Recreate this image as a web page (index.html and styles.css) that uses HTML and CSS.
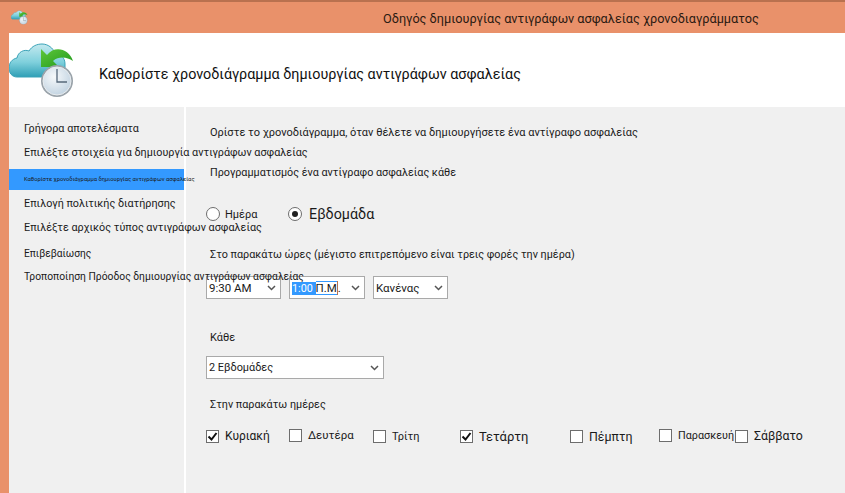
FILE: index.html
```html
<!DOCTYPE html>
<html lang="el">
<head>
<meta charset="utf-8">
<title>Οδηγός δημιουργίας αντιγράφων ασφαλείας χρονοδιαγράμματος</title>
<link rel="stylesheet" href="styles.css">
</head>
<body>

<svg class="defs" width="0" height="0">
  <defs>
    <linearGradient id="cloudfill" x1="0" y1="0" x2="0" y2="1">
      <stop offset="0" stop-color="#c4e9ef"/>
      <stop offset="0.55" stop-color="#7fd0dc"/>
      <stop offset="1" stop-color="#2f9fb6"/>
    </linearGradient>
    <linearGradient id="arrowfill" x1="0" y1="0" x2="1" y2="1">
      <stop offset="0" stop-color="#5fc63a"/>
      <stop offset="1" stop-color="#1f9a1c"/>
    </linearGradient>
    <radialGradient id="clockfill" cx="0.4" cy="0.35" r="0.8">
      <stop offset="0" stop-color="#f6f9fb"/>
      <stop offset="1" stop-color="#b9cddd"/>
    </radialGradient>
    <symbol id="backupicon" viewBox="0 0 66 54">
      <path d="M8 34 C3 34 0 30 0 25 C0 20 3 16 8 15 C9 9 15 6 20 8 C23 3 28 1 33 1 C39 1 44 5 46 10 C52 11 56 15 56 21 L56 34 Z" fill="url(#cloudfill)" stroke="#3aa3b8" stroke-width="1"/>
      <path d="M32 6 L32 24 L50 24 L44 18 C50 13 58 14 64 18 C60 6 46 2 38 12 Z" fill="url(#arrowfill)"/>
      <circle cx="48" cy="38" r="16" fill="#9aa3aa"/>
      <circle cx="48" cy="38" r="14" fill="url(#clockfill)" stroke="#e8ecef" stroke-width="1"/>
      <path d="M48 26 V39 H58" fill="none" stroke="#56687a" stroke-width="1.300"/>
    </symbol>
  </defs>
</svg>

<div class="window">
  <div class="titlebar">
    <svg class="smallicon"><use href="#backupicon"/></svg>
    <div class="title">Οδηγός δημιουργίας αντιγράφων ασφαλείας χρονοδιαγράμματος</div>
  </div>

  <div class="header">
    <svg class="bigicon"><use href="#backupicon"/></svg>
    <h1>Καθορίστε χρονοδιάγραμμα δημιουργίας αντιγράφων ασφαλείας</h1>
  </div>

  <div class="main">
    <div class="sidebar">
      <div class="step step1">Γρήγορα αποτελέσματα</div>
      <div class="step step2">Επιλέξτε στοιχεία για δημιουργία αντιγράφων ασφαλείας</div>
      <div class="step current">Καθορίστε χρονοδιάγραμμα δημιουργίας αντιγράφων ασφαλείας</div>
      <div class="step step4">Επιλογή πολιτικής διατήρησης</div>
      <div class="step step5">Επιλέξτε αρχικός τύπος αντιγράφων ασφαλείας</div>
      <div class="step step6">Επιβεβαίωσης</div>
      <div class="step step7">Τροποποίηση Πρόοδος δημιουργίας αντιγράφων ασφαλείας</div>
    </div>

    <div class="panel">
      <p class="line intro">Ορίστε το χρονοδιάγραμμα, όταν θέλετε να δημιουργήσετε ένα αντίγραφο ασφαλείας</p>
      <p class="line every">Προγραμματισμός ένα αντίγραφο ασφαλείας κάθε</p>

      <div class="radios">
        <span class="radio"></span><span class="radiolabel small">Ημέρα</span>
        <span class="radio on"></span><span class="radiolabel big">Εβδομάδα</span>
      </div>

      <p class="line hours">Στο παρακάτω ώρες (μέγιστο επιτρεπόμενο είναι τρεις φορές την ημέρα)</p>

      <div class="times">
        <div class="combo w75"><span>9:30 AM</span><svg class="chevron" viewBox="0 0 9 6"><path d="M1 1 L4.500 4.500 L8 1"/></svg></div>
        <div class="combo w76"><span><span class="sel">1:00 </span><span class="caret">Π.Μ</span>.</span><svg class="chevron" viewBox="0 0 9 6"><path d="M1 1 L4.500 4.500 L8 1"/></svg></div>
        <div class="combo w75"><span>Κανένας</span><svg class="chevron" viewBox="0 0 9 6"><path d="M1 1 L4.500 4.500 L8 1"/></svg></div>
      </div>

      <p class="line eachlabel">Κάθε</p>
      <div class="combo wide"><span>2 Εβδομάδες</span><svg class="chevron" viewBox="0 0 9 6"><path d="M1 1 L4.500 4.500 L8 1"/></svg></div>

      <p class="line dayslabel">Στην παρακάτω ημέρες</p>

      <div class="days">
        <div class="day d1"><span class="check on"><svg viewBox="0 0 11 11"><path d="M1.500 5.500 L4.500 8.500 L9.500 2"/></svg></span><span>Κυριακή</span></div>
        <div class="day d2 raised"><span class="check"></span><span>Δευτέρα</span></div>
        <div class="day d3"><span class="check"></span><span>Τρίτη</span></div>
        <div class="day d4"><span class="check on"><svg viewBox="0 0 11 11"><path d="M1.500 5.500 L4.500 8.500 L9.500 2"/></svg></span><span>Τετάρτη</span></div>
        <div class="day d5"><span class="check"></span><span>Πέμπτη</span></div>
        <div class="day d6 raised"><span class="check"></span><span>Παρασκευή</span></div>
        <div class="day d7"><span class="check"></span><span>Σάββατο</span></div>
      </div>
    </div>
  </div>
</div>

</body>
</html>
```

FILE: styles.css
```css
html, body {margin:0; padding:0;}
body {width:845px; height:493px; overflow:hidden; font:10.8px Roboto, "Open Sans", sans-serif; color:#1a1a1a;}
.defs {position:absolute;}

.window {height:491px; background-color:#E9916A; border-top:2px solid #B9714F; padding-left:9px; display:flex; flex-direction:column;}

.titlebar {height:31px; flex:none; display:flex; align-items:center;}
.smallicon {width:17px; height:15px; margin:0 0 0 2px; flex:none;}
.title {margin:2px 0 0 355px; font-size:12.7px; color:#2b1a12; white-space:nowrap;}

.header {height:74px; flex:none; background-color:#fff; display:flex; align-items:flex-start;}
.bigicon {width:66px; height:54px; margin:10px 0 0 0; flex:none;}
h1 {margin:33px 0 0 24px; font-size:14.35px; font-weight:normal; color:#111; white-space:nowrap;}

.main {flex:1; display:flex; background-color:#F0F0F0;}

/* step text runs past the column, over the panel and its combos */
.sidebar {width:175px; flex:none; border-right:2px solid #fff; padding-top:12px; position:relative; z-index:1;}
.step {padding-left:15px; white-space:nowrap; height:24px; line-height:20px;}
.step2 {height:26px;}
.current {height:21px; line-height:20px; font-size:5.8px; background-color:#3399FF; color:#1a1a1a; margin-bottom:4px;}
.step6 {height:23px; margin-top:2px; font-size:10.2px;}
.step7 {font-size:10.3px;}

.panel {flex:1; padding:18px 0 0 20px;}
.line {margin:0 0 0 4px; line-height:16px; white-space:nowrap;}
.intro {font-size:11px;}
.every {margin-top:24px;}
.hours {margin-top:21px;}
.eachlabel {margin-top:31px; font-size:11px;}
.dayslabel {margin-top:18px;}

.radios {display:flex; align-items:center; height:24px; margin-top:21px;}
.radio {width:12px; height:12px; border:1px solid #6d6d6d; border-radius:50%; background-color:#fff; flex:none; position:relative;}
.radio.on:after {content:""; position:absolute; left:3px; top:3px; width:6px; height:6px; border-radius:50%; background-color:#222;}
.radiolabel.small {margin:0 32px 0 5px; font-size:11px; width:31px;}
.radiolabel.big {margin-left:7px; font-size:14.3px;}

.times {display:flex; gap:8px; margin-top:13px; font-size:11.5px;}
.combo {box-sizing:border-box; height:23px; border:1px solid #A9A9A9; background-color:#fff; display:flex; align-items:center; justify-content:space-between; padding:0 4px 0 2px; white-space:nowrap;}
.w75 {width:75px;}
.w76 {width:76px;}
.wide {width:178px; margin-top:10px; font-size:10.9px;}
.chevron {width:9px; height:6px; fill:none; stroke:#555; stroke-width:1.500;}
.sel {background-color:#3399FF; color:#fff; white-space:pre; font-size:10.8px;}
.caret {box-shadow:inset 0 -1px 0 #3399FF, inset 0 1px 0 #3399FF; border-right:1px solid #B9714F;}

.days {display:flex; margin-top:16px;}
.day {display:flex; align-items:center; gap:6px; white-space:nowrap; height:14px; flex:none; font-size:12px;}
.raised {margin-top:-1px;}
.d1 {width:83px;}
.d2 {width:84px; font-size:11.5px;}
.d3 {width:87px; font-size:11px;}
.d4 {width:110px; font-size:13px;}
.d5 {width:89px; font-size:12.4px;}
.d6 {width:76px; font-size:10.8px;}
.d7 {font-size:12.3px;}
.check {box-sizing:border-box; width:13px; height:13px; border:1px solid #6d6d6d; background-color:#fff; flex:none; display:block;}
.check svg {display:block; width:11px; height:11px; fill:none; stroke:#111; stroke-width:2;}
```
